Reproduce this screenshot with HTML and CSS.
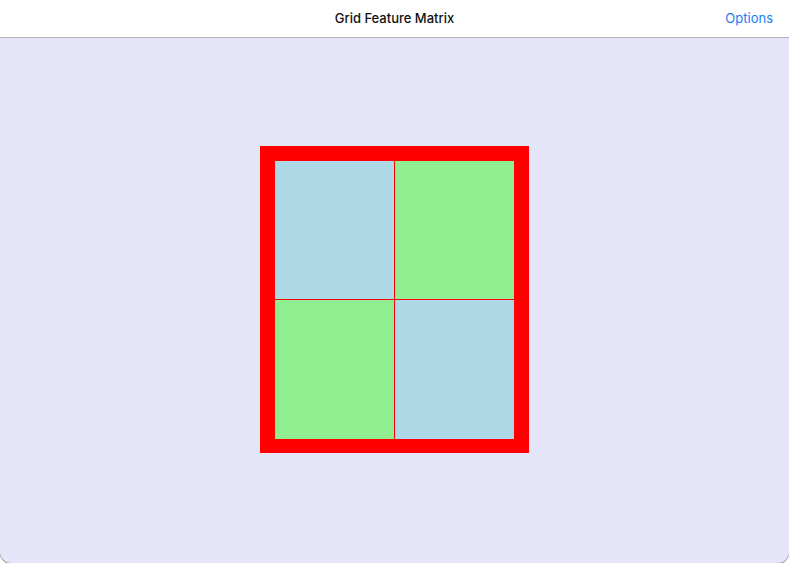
FILE: index.html
```html
<!DOCTYPE html>
<html>
<head>
<meta charset="utf-8">
<link rel="stylesheet" href="styles.css">
</head>
<body>
<div class="app">
  <header class="navbar">
    <div class="title">Grid Feature Matrix</div>
    <div class="action">Options</div>
  </header>
  <main class="content">
    <div class="frame">
      <div class="grid">
        <div class="cell blue left top"></div>
        <div class="cell green top"></div>
        <div class="cell green left"></div>
        <div class="cell blue"></div>
      </div>
    </div>
  </main>
</div>
</body>
</html>
```
FILE: styles.css
```css
html, body {
  margin: 0;
  padding: 0;
  background: #ffffff;
}
.app {
  width: 789px;
  height: 563px;
  display: flex;
  flex-direction: column;
  font-family: Inter, "Liberation Sans", sans-serif;
}
.navbar {
  height: 37px;
  flex: 0 0 37px;
  border-bottom: 1px solid #b3b3b8;
  background: #ffffff;
  position: relative;
  display: flex;
  align-items: center;
  justify-content: center;
}
.title {
  font-size: 13px;
  font-weight: 500;
  color: #111;
  margin-top: -1px;
}
.action {
  position: absolute;
  right: 16px;
  top: 10px;
  font-size: 13px;
  color: #1a7cf5;
}
.content {
  flex: 1;
  background: #e5e5f9;
  border-radius: 0 0 11px 11px;
  box-shadow: 0 1px 0 #8c8c8c, 1px 0 0 #d8d8de, -1px 0 0 #d8d8de;
  display: flex;
  align-items: center;
  justify-content: center;
}
.frame {
  background: #ff0000;
  padding: 15px 15px 14px 15px;
  margin-left: -1px;
  margin-top: -2px;
}
.grid {
  display: grid;
  grid-template-columns: 120px 119px;
  grid-template-rows: 139px 139px;
}
.cell.blue { background: #add8e6; }
.cell.green { background: #90ee90; }
.cell.left { border-right: 1px solid #ff0000; }
.cell.top { border-bottom: 1px solid #ff0000; }
```
